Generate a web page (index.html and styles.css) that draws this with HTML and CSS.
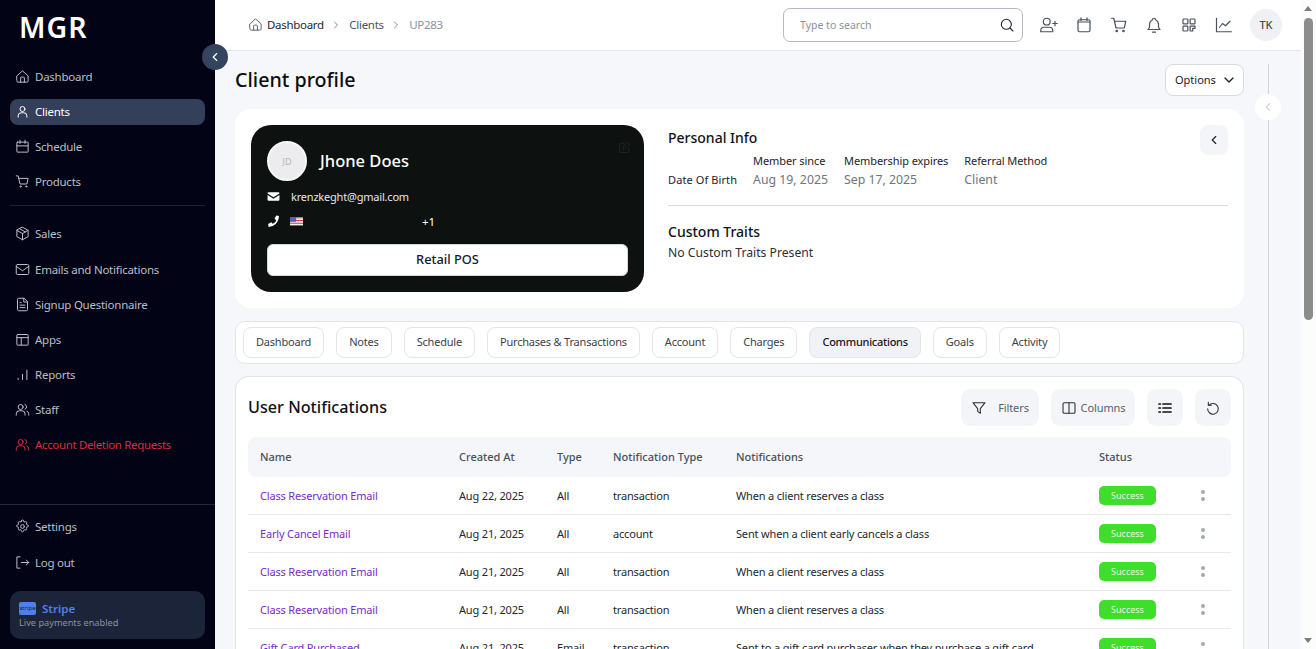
FILE: index.html
```html
<!DOCTYPE html>
<html lang="en">
<head>
  <meta charset="UTF-8">
  <meta name="viewport" content="width=device-width, initial-scale=1.0">
  <title>Client profile</title>
  <link rel="stylesheet" href="styles.css">
</head>
<body>
  <div class="app">
    <aside class="sidebar">
      <div class="logo">MGR</div>
      <button class="collapse" type="button" aria-label="Collapse">
        <svg viewBox="0 0 24 24" class="ico-sm"><path d="M15 6l-6 6 6 6"/></svg>
      </button>
      <nav class="nav">
        <a class="nav-item"><svg viewBox="0 0 24 24" class="ico"><path d="M3 11l9-8 9 8v8a2 2 0 0 1-2 2H5a2 2 0 0 1-2-2z"/><path d="M9 21v-7a1 1 0 0 1 1-1h4a1 1 0 0 1 1 1v7"/></svg>Dashboard</a>
        <a class="nav-item active"><svg viewBox="0 0 24 24" class="ico"><circle cx="12" cy="8" r="4"/><path d="M5 21v-2a5 5 0 0 1 5-5h4a5 5 0 0 1 5 5v2"/></svg>Clients</a>
        <a class="nav-item"><svg viewBox="0 0 24 24" class="ico"><rect x="3" y="5" width="18" height="16" rx="1"/><path d="M8 2v5M16 2v5M3 11h18"/></svg>Schedule</a>
        <a class="nav-item"><svg viewBox="0 0 24 24" class="ico"><path d="M2 3h3l3 13h11l2-9H6"/><circle cx="9" cy="20" r="1"/><circle cx="18" cy="20" r="1"/></svg>Products</a>
        <div class="nav-sep"></div>
        <a class="nav-item sales"><svg viewBox="0 0 24 24" class="ico"><path d="M12 2l9 5v10l-9 5-9-5V7z"/><path d="M3 7l9 5 9-5M12 12v10M7.5 4.5l9 5"/></svg>Sales</a>
        <a class="nav-item"><svg viewBox="0 0 24 24" class="ico"><rect x="2" y="4" width="20" height="16" rx="2"/><path d="M2 7l10 7 10-7"/></svg>Emails and Notifications</a>
        <a class="nav-item"><svg viewBox="0 0 24 24" class="ico"><path d="M14 2H6a2 2 0 0 0-2 2v16a2 2 0 0 0 2 2h12a2 2 0 0 0 2-2V8z"/><path d="M14 2v6h6M8 13h8M8 17h8M8 9h2"/></svg>Signup Questionnaire</a>
        <a class="nav-item"><svg viewBox="0 0 24 24" class="ico"><rect x="3" y="4" width="18" height="17" rx="1"/><path d="M3 9h18M10 9v12"/></svg>Apps</a>
        <a class="nav-item"><svg viewBox="0 0 24 24" class="ico"><path d="M5 20v-2M12 20v-8M19 20V5"/></svg>Reports</a>
        <a class="nav-item"><svg viewBox="0 0 24 24" class="ico"><circle cx="9" cy="8" r="4"/><path d="M2 21v-2a5 5 0 0 1 5-5h4a5 5 0 0 1 5 5v2M16 4a4 4 0 0 1 0 7.5M22 21v-2a5 5 0 0 0-3-4.5"/></svg>Staff</a>
        <a class="nav-item danger"><svg viewBox="0 0 24 24" class="ico"><circle cx="9" cy="8" r="4"/><path d="M2 21v-2a5 5 0 0 1 5-5h4a5 5 0 0 1 5 5v2M16 4a4 4 0 0 1 0 7.5M22 21v-2a5 5 0 0 0-3-4.5"/></svg>Account Deletion Requests</a>
      </nav>
      <div class="side-bottom">
        <a class="nav-item"><svg viewBox="0 0 24 24" class="ico"><circle cx="12" cy="12" r="3"/><path d="M10.3 3.3a1.7 1.7 0 0 1 3.4 0 1.7 1.7 0 0 0 2.6 1.1 1.7 1.7 0 0 1 2.3 2.3 1.7 1.7 0 0 0 1.1 2.6 1.7 1.7 0 0 1 0 3.4 1.7 1.7 0 0 0-1.1 2.6 1.7 1.7 0 0 1-2.3 2.3 1.7 1.7 0 0 0-2.6 1.1 1.7 1.7 0 0 1-3.4 0 1.7 1.7 0 0 0-2.6-1.1 1.7 1.7 0 0 1-2.3-2.3 1.7 1.7 0 0 0-1.1-2.6 1.7 1.7 0 0 1 0-3.4 1.7 1.7 0 0 0 1.1-2.6 1.7 1.7 0 0 1 2.3-2.3 1.7 1.7 0 0 0 2.6-1.1z"/></svg>Settings</a>
        <a class="nav-item logout"><svg viewBox="0 0 24 24" class="ico"><path d="M8 3H3v18h5M10 12h12M18 8l4 4-4 4"/></svg>Log out</a>
        <div class="stripe">
          <div class="stripe-top"><span class="stripe-logo">stripe</span><span class="stripe-name">Stripe</span></div>
          <div class="stripe-sub">Live payments enabled</div>
        </div>
      </div>
    </aside>

    <div class="main">
      <header class="topbar">
        <div class="crumbs">
          <svg viewBox="0 0 24 24" class="ico crumb-home"><path d="M3 11l9-8 9 8v8a2 2 0 0 1-2 2H5a2 2 0 0 1-2-2z"/><path d="M9 21v-7a1 1 0 0 1 1-1h4a1 1 0 0 1 1 1v7"/></svg>
          <span class="crumb-first">Dashboard</span>
          <svg viewBox="0 0 24 24" class="crumb-sep"><path d="M9 6l6 6-6 6"/></svg>
          <span class="crumb-mid">Clients</span>
          <svg viewBox="0 0 24 24" class="crumb-sep"><path d="M9 6l6 6-6 6"/></svg>
          <span class="crumb-last">UP283</span>
        </div>
        <div class="top-right">
          <div class="search">
            <span class="search-text">Type to search</span>
            <svg viewBox="0 0 24 24" class="ico-search"><circle cx="11" cy="11" r="7.5"/><path d="M21 21l-4.5-4.5"/></svg>
          </div>
          <div class="top-icons">
            <svg viewBox="0 0 24 24" class="top-ico"><circle cx="9" cy="7.5" r="4.5"/><path d="M1 21v-1.5A4.5 4.5 0 0 1 5.5 15h7a4.5 4.5 0 0 1 4.5 4.5V21zM20 7v6M17 10h6"/></svg>
            <svg viewBox="0 0 24 24" class="top-ico"><rect x="4" y="5" width="16" height="16" rx="2"/><path d="M8 2.5V6M16 2.5V6M4 8h16"/></svg>
            <svg viewBox="0 0 24 24" class="top-ico"><path d="M2 3h3l3 13h11l2-9H6"/><circle cx="9" cy="20" r="1"/><circle cx="18" cy="20" r="1"/></svg>
            <svg viewBox="0 0 24 24" class="top-ico"><path d="M10 5a2 2 0 1 1 4 0 7 7 0 0 1 4 6v4l2 3H4l2-3v-4a7 7 0 0 1 4-6M10 21.5h4"/></svg>
            <svg viewBox="0 0 24 24" class="top-ico"><rect x="4" y="4" width="6.5" height="6.5" rx="1"/><rect x="13.5" y="4" width="6.5" height="6.5" rx="1"/><rect x="4" y="13.5" width="6.5" height="6.5" rx="1"/><path d="M13.5 13.5H20v3h-3V20h-3.5z"/></svg>
            <svg viewBox="0 0 24 24" class="top-ico"><path d="M2 3v18h20M6 15l4-5 4 3 6-6"/></svg>
          </div>
          <div class="avatar">TK</div>
        </div>
      </header>

      <div class="body-row">
        <main class="page">
          <div class="page-head">
            <h1>Client profile</h1>
            <button class="options" type="button"><span class="options-label">Options</span>
              <svg viewBox="0 0 24 24" class="options-ico"><path d="M6 9l6 6 6-6"/></svg>
            </button>
          </div>

          <section class="profile">
            <div class="id-card">
              <svg viewBox="0 0 24 24" class="edit"><path d="M11 4H5a2 2 0 0 0-2 2v13a2 2 0 0 0 2 2h13a2 2 0 0 0 2-2v-6M18 3l3 3-9 9H9v-3z"/></svg>
              <div class="id-head">
                <div class="id-avatar">JD</div>
                <div class="id-name">Jhone Does</div>
              </div>
              <div class="id-line">
                <svg viewBox="0 0 24 24" class="solid"><path d="M1 6a2 2 0 0 1 2-2h18a2 2 0 0 1 2 2v.5l-11 7-11-7z"/><path d="M1 9l11 7 11-7v9a2 2 0 0 1-2 2H3a2 2 0 0 1-2-2z"/></svg>
                <span>krenzkeght@gmail.com</span>
              </div>
              <div class="id-line phone">
                <svg viewBox="0 0 24 24" class="solid"><path d="M22 2l-5-1-3 6 3 2.5c-1.2 3-3.5 5.3-6.5 6.5L8 13.5l-6 3 1 5.5c10.5 0 19-9 19-20z"/></svg>
                <svg viewBox="0 0 19 13" class="flag"><rect width="19" height="13" fill="#f1eef2"/><path d="M0 1h19M0 5h19M0 9h19M0 12.5h19" stroke="#d33a4a" stroke-width="1.5"/><rect width="9" height="7" fill="#5a5fb0"/></svg>
                <span class="dial">+1</span>
              </div>
              <button class="retail" type="button">Retail POS</button>
            </div>

            <div class="info">
              <button class="info-toggle" type="button" aria-label="Back">
                <svg viewBox="0 0 24 24" class="ico-sm"><path d="M15 6l-6 6 6 6"/></svg>
              </button>
              <h2>Personal Info</h2>
              <div class="facts">
                <div class="fact fact-first"><div class="fact-label">Date Of Birth</div></div>
                <div class="fact"><div class="fact-label">Member since</div><div class="fact-value">Aug 19, 2025</div></div>
                <div class="fact"><div class="fact-label">Membership expires</div><div class="fact-value">Sep 17, 2025</div></div>
                <div class="fact"><div class="fact-label">Referral Method</div><div class="fact-value">Client</div></div>
              </div>
              <hr class="info-sep">
              <h2>Custom Traits</h2>
              <p class="no-traits">No Custom Traits Present</p>
            </div>
          </section>

          <div class="tabs">
            <a class="tab">Dashboard</a>
            <a class="tab">Notes</a>
            <a class="tab">Schedule</a>
            <a class="tab">Purchases &amp; Transactions</a>
            <a class="tab">Account</a>
            <a class="tab">Charges</a>
            <a class="tab current">Communications</a>
            <a class="tab">Goals</a>
            <a class="tab">Activity</a>
          </div>

          <section class="panel">
            <div class="panel-head">
              <h2>User Notifications</h2>
              <div class="tools">
                <button class="tool filters" type="button"><svg viewBox="0 0 24 24" class="tool-ico"><path d="M3 4h18l-7 9v7l-4-3v-4z"/></svg>Filters</button>
                <button class="tool columns" type="button"><svg viewBox="0 0 24 24" class="tool-ico"><rect x="3" y="4" width="18" height="16" rx="2"/><path d="M12 4v16"/></svg>Columns</button>
                <button class="tool square" type="button"><svg viewBox="0 0 24 24" class="tool-ico heavy"><path d="M9 6h12M9 12h12M9 18h12M3 6h2M3 12h2M3 18h2"/></svg></button>
                <button class="tool square" type="button"><svg viewBox="0 0 24 24" class="tool-ico"><path d="M5 3.5V8h4.5"/><path d="M6 8a8 8 0 1 1-2 5"/></svg></button>
              </div>
            </div>
            <table class="grid">
              <thead>
                <tr><th class="c-name">Name</th><th class="c-date">Created At</th><th class="c-type">Type</th><th class="c-ntype">Notification Type</th><th class="c-note">Notifications</th><th class="c-status">Status</th><th></th></tr>
              </thead>
              <tbody>
                <tr><td><a class="link">Class Reservation Email</a></td><td>Aug 22, 2025</td><td>All</td><td>transaction</td><td>When a client reserves a class</td><td><span class="badge">Success</span></td><td><span class="dots"></span></td></tr>
                <tr><td><a class="link">Early Cancel Email</a></td><td>Aug 21, 2025</td><td>All</td><td>account</td><td>Sent when a client early cancels a class</td><td><span class="badge">Success</span></td><td><span class="dots"></span></td></tr>
                <tr><td><a class="link">Class Reservation Email</a></td><td>Aug 21, 2025</td><td>All</td><td>transaction</td><td>When a client reserves a class</td><td><span class="badge">Success</span></td><td><span class="dots"></span></td></tr>
                <tr><td><a class="link">Class Reservation Email</a></td><td>Aug 21, 2025</td><td>All</td><td>transaction</td><td>When a client reserves a class</td><td><span class="badge">Success</span></td><td><span class="dots"></span></td></tr>
                <tr><td><a class="link">Gift Card Purchased</a></td><td>Aug 21, 2025</td><td>Email</td><td>transaction</td><td>Sent to a gift card purchaser when they purchase a gift card</td><td><span class="badge">Success</span></td><td><span class="dots"></span></td></tr>
              </tbody>
            </table>
          </section>
        </main>

        <div class="rail">
          <button class="rail-toggle" type="button" aria-label="Expand">
            <svg viewBox="0 0 24 24" class="ico-sm"><path d="M15 6l-6 6 6 6"/></svg>
          </button>
        </div>
      </div>
    </div>

    <div class="scrollbar">
      <span class="arrow up"></span>
      <span class="thumb"></span>
      <span class="arrow down"></span>
    </div>
  </div>
</body>
</html>
```

FILE: styles.css
```css
* {
  box-sizing: border-box;
}

html, body {
  margin: 0;
  height: 100%;
  overflow: hidden;
}

body {
  font-family: "Noto Sans", Arial, sans-serif;
  font-size: 12px;
  color: #14171f;
  background: #f6f7fa;
}

svg {
  fill: none;
  stroke: currentColor;
  stroke-width: 1.6;
  stroke-linecap: round;
  stroke-linejoin: round;
  flex-shrink: 0;
}

button {
  font-family: inherit;
  cursor: pointer;
}

h1, h2, p {
  margin: 0;
  font-weight: 500;
}

.ico {
  width: 15px;
  height: 15px;
}

.ico-sm {
  width: 14px;
  height: 14px;
  stroke-width: 2;
}

.app {
  display: flex;
  height: 649px;
  overflow: hidden;
}

/* sidebar */
.sidebar {
  position: relative;
  display: flex;
  flex-direction: column;
  flex: 0 0 215px;
  background: #020314;
  color: #b9bfca;
}

.logo {
  height: 59px;
  padding: 7px 0 0 19px;
  font-size: 28.5px;
  line-height: 40px;
  font-weight: 600;
  letter-spacing: 1px;
  color: #fff;
}

.collapse {
  position: absolute;
  top: 44px;
  left: 202px;
  z-index: 3;
  display: flex;
  align-items: center;
  justify-content: center;
  width: 26px;
  height: 26px;
  padding: 0;
  border: 0;
  border-radius: 50%;
  background: #34435e;
  color: #fff;
}

.nav {
  display: flex;
  flex-direction: column;
  padding: 5px 10px 0;
}

.nav-item {
  display: flex;
  align-items: center;
  gap: 5px;
  height: 26px;
  margin-bottom: 9px;
  padding: 0 0 2px 5px;
  border-radius: 8px;
  font-size: 11.5px;
  letter-spacing: -0.25px;
  white-space: nowrap;
}

.nav-item.active {
  background: #344059;
  color: #fff;
}

.nav-item.danger {
  color: #d5303f;
  letter-spacing: -0.35px;
}

.nav-item.sales {
  margin-bottom: 10px;
}

.nav-sep {
  height: 1px;
  margin: 1px 0 15px;
  background: #1f2433;
}

.side-bottom {
  margin-top: auto;
  padding: 9px 10px 10px;
  border-top: 1px solid #252a38;
}

.nav-item.logout {
  margin-top: 10px;
  margin-bottom: 15px;
}

.stripe {
  height: 48px;
  padding: 10px 9px 0;
  border-radius: 10px;
  background: #1b2438;
}

.stripe-top {
  display: flex;
  align-items: center;
  gap: 6px;
  height: 14px;
}

.stripe-logo {
  width: 17px;
  height: 13px;
  border-radius: 2px;
  background: #4f7fef;
  color: #14213f;
  font-size: 6px;
  line-height: 13px;
  text-align: center;
}

.stripe-name {
  font-weight: 600;
  font-size: 11.5px;
  color: #4f80ee;
}

.stripe-sub {
  margin-top: 2px;
  font-size: 9.2px;
  line-height: 12px;
  color: #8a93a3;
}

/* topbar */
.main {
  display: flex;
  flex-direction: column;
  flex: 1;
  min-width: 0;
}

.topbar {
  display: flex;
  align-items: center;
  justify-content: space-between;
  flex: 0 0 51px;
  padding: 0 19px 1px 33px;
  background: #fff;
  border-bottom: 1px solid #e4e5e8;
}

.crumbs {
  display: flex;
  align-items: center;
  font-size: 11.5px;
  letter-spacing: -0.3px;
}

.crumb-home {
  margin-right: 4px;
  color: #5d6470;
}

.crumb-first {
  color: #23272f;
}

.crumb-mid {
  color: #4b5260;
}

.crumb-last {
  color: #8b919c;
}

.crumb-sep {
  width: 12px;
  height: 12px;
  margin: 0 7px 0 6.5px;
  color: #6a707c;
}

.top-right {
  display: flex;
  align-items: center;
}

.search {
  display: flex;
  align-items: center;
  justify-content: space-between;
  width: 240px;
  height: 34px;
  padding: 0 7px 0 16px;
  border: 1px solid #b6bac2;
  border-radius: 7px;
  font-size: 10.5px;
  color: #8d929b;
}

.ico-search {
  width: 16px;
  height: 16px;
  color: #20242c;
}

.top-icons {
  display: flex;
  align-items: center;
  gap: 17px;
  margin-left: 16.5px;
  color: #4a505c;
}

.top-ico {
  width: 18px;
  height: 18px;
  stroke-width: 1.6;
}

.avatar {
  display: flex;
  align-items: center;
  justify-content: center;
  width: 32px;
  height: 32px;
  margin-left: 17.5px;
  border-radius: 50%;
  background: #eff1f4;
  color: #454b57;
  font-size: 11px;
  font-weight: 500;
}

/* page */
.body-row {
  display: flex;
  flex: 1;
  min-height: 0;
}

.page {
  flex: 1;
  min-width: 0;
  padding: 13px 24px 0 20px;
  overflow: hidden;
}

.page-head {
  display: flex;
  align-items: center;
  justify-content: space-between;
  height: 32px;
  margin-bottom: 13px;
}

h1 {
  padding-bottom: 2px;
  font-size: 19.7px;
  color: #0b0d12;
}

.options {
  display: flex;
  align-items: center;
  justify-content: space-between;
  width: 79px;
  height: 32px;
  padding: 0 6px 0 9px;
  border: 1px solid #d8dbe0;
  border-radius: 8px;
  background: #fff;
  font-size: 11px;
  color: #1c2029;
}

.options-label {
  padding-bottom: 2px;
}

.options-ico {
  width: 16px;
  height: 16px;
  stroke-width: 2;
}

.profile {
  display: flex;
  gap: 24px;
  height: 199px;
  padding: 16px;
  border-radius: 16px;
  background: #fff;
}

.id-card {
  position: relative;
  flex: 0 0 393px;
  padding: 16px;
  border-radius: 20px;
  background: #0d1110;
  color: #e6e8ea;
}

.edit {
  position: absolute;
  top: 16px;
  right: 13px;
  width: 13px;
  height: 13px;
  color: #232827;
}

.id-head {
  display: flex;
  align-items: center;
  gap: 13px;
}

.id-avatar {
  display: flex;
  align-items: center;
  justify-content: center;
  width: 40px;
  height: 40px;
  border-radius: 50%;
  background: #ececee;
  border: 2px solid #f7f7f8;
  color: #b4b6ba;
  font-size: 9px;
}

.id-name {
  margin-bottom: 2px;
  font-size: 16.5px;
  font-weight: 500;
  color: #fff;
}

.id-line {
  display: flex;
  align-items: center;
  gap: 11px;
  height: 25px;
  margin-top: 3px;
  font-size: 11px;
  letter-spacing: -0.2px;
}

.id-line + .id-line {
  margin-top: 0;
}

.solid {
  width: 13px;
  height: 13px;
  fill: #fff;
  stroke: none;
}

.phone {
  gap: 10px;
}

.flag {
  width: 13px;
  height: 9px;
  stroke: none;
}

.dial {
  margin-left: 109px;
  font-size: 11.5px;
  color: #fff;
}

.retail {
  width: 100%;
  height: 32px;
  margin-top: 10px;
  padding: 0 0 2px;
  border: 1px solid #d6d8dc;
  border-radius: 6px;
  background: #fff;
  font-size: 12.8px;
  font-weight: 500;
  color: #15181e;
}

.info {
  position: relative;
  flex: 1;
  padding-top: 3px;
}

.info h2 {
  font-size: 14px;
  line-height: 20px;
  color: #101319;
}

.info-toggle {
  position: absolute;
  top: 0;
  right: 0;
  display: flex;
  align-items: center;
  justify-content: center;
  width: 28px;
  height: 30px;
  padding: 0;
  border: 0;
  border-radius: 8px;
  background: #f4f5f8;
  color: #20242c;
}

.facts {
  display: flex;
  align-items: flex-end;
  gap: 16px;
  height: 38px;
  margin-top: 3px;
}

.fact-first {
  padding-bottom: 1px;
}

.fact-label {
  font-size: 11px;
  line-height: 16px;
  letter-spacing: -0.08px;
  color: #20242c;
}

.fact-first .fact-label {
  letter-spacing: 0.1px;
}

.fact-value {
  margin-top: 2px;
  font-size: 12.3px;
  line-height: 18px;
  color: #6f7580;
}

.info-sep {
  margin: 16px 0 16px;
  border: 0;
  border-top: 1px solid #d8dade;
}

.no-traits {
  margin-top: 2px;
  font-size: 12.2px;
  font-weight: 400;
  color: #2c303a;
}

.tabs {
  display: flex;
  align-items: center;
  gap: 12px;
  height: 43px;
  margin-top: 13px;
  padding: 0 7px;
  border: 1px solid #e3e5ea;
  border-radius: 10px;
  background: #fff;
}

.tab {
  display: flex;
  align-items: center;
  height: 31px;
  padding: 0 12px 2px;
  border: 1px solid #e3e5ea;
  border-radius: 8px;
  font-size: 11px;
  letter-spacing: -0.2px;
  color: #3a3f4a;
  white-space: nowrap;
}

.tab.current {
  background: #f1f2f6;
  color: #15181e;
  font-weight: 500;
  letter-spacing: -0.27px;
}

.panel {
  height: 340px;
  margin-top: 12px;
  padding: 12px 12px 0;
  border: 1px solid #e3e5ea;
  border-bottom: 0;
  border-radius: 14px 14px 0 0;
  background: #fff;
}

.panel-head {
  display: flex;
  align-items: flex-start;
  justify-content: space-between;
  height: 38px;
  margin-bottom: 10px;
}

.panel-head h2 {
  font-size: 16.2px;
  line-height: 36px;
  color: #0f1218;
}

.tools {
  display: flex;
  gap: 12px;
}

.tool {
  display: flex;
  align-items: center;
  justify-content: center;
  height: 37px;
  padding: 0;
  border: 0;
  border-radius: 9px;
  background: #f4f5f8;
  font-size: 11px;
  letter-spacing: -0.1px;
  color: #596070;
}

.filters {
  width: 78px;
  gap: 11px;
}

.columns {
  width: 84px;
  gap: 4px;
}

.square {
  width: 36px;
  color: #20242c;
}

.tool-ico {
  width: 16px;
  height: 16px;
  color: #2a2e37;
}

.tool-ico.heavy {
  stroke-width: 2.6;
  color: #111;
}

.grid {
  width: 100%;
  border-collapse: separate;
  border-spacing: 0;
  table-layout: fixed;
  font-size: 11px;
}

.grid th {
  height: 40px;
  padding: 0 0 2px 12px;
  background: #f5f6f9;
  text-align: left;
  font-weight: 500;
  color: #4a4f59;
}

.grid th:first-child {
  border-radius: 8px 0 0 8px;
}

.grid th:last-child {
  border-radius: 0 8px 8px 0;
}

.grid td {
  height: 38px;
  padding: 0 0 0 12px;
  border-bottom: 1px solid #e6e8ec;
  color: #23272f;
  letter-spacing: -0.17px;
  white-space: nowrap;
  overflow: hidden;
}

.c-name {
  width: 199px;
}

.c-date {
  width: 98px;
}

.c-type {
  width: 56px;
}

.c-ntype {
  width: 123px;
}

.c-note {
  width: 363px;
}

.c-status {
  width: 85px;
}

.link {
  color: #7b2bc9;
}

.badge {
  display: block;
  width: 57px;
  height: 19px;
  border-radius: 5px;
  background: #3fdd2c;
  color: #e4f9df;
  font-size: 9px;
  letter-spacing: 0;
  line-height: 19px;
  text-align: center;
}

.dots {
  display: block;
  width: 4px;
  height: 4px;
  margin: -6px 0 0 17px;
  border-radius: 50%;
  background: #a3a8b0;
  box-shadow: 0 7px 0 #a3a8b0;
}

/* right rail */
.rail {
  position: relative;
  flex: 0 0 33px;
  margin-top: 13px;
  border-left: 1px solid #cfd2d8;
}

.rail-toggle {
  position: absolute;
  top: 30px;
  left: -14px;
  display: flex;
  align-items: center;
  justify-content: center;
  width: 26px;
  height: 26px;
  padding: 0;
  border: 0;
  border-radius: 50%;
  background: #fff;
  color: #d3d6db;
}

/* browser scrollbar */
.scrollbar {
  position: relative;
  flex: 0 0 15px;
  background: #fcfcfc;
}

.thumb {
  position: absolute;
  top: 18px;
  left: 3px;
  width: 9px;
  height: 302px;
  border-radius: 5px;
  background: #8c8c8c;
}

.arrow {
  position: absolute;
  left: 3px;
  border-left: 4.5px solid transparent;
  border-right: 4.5px solid transparent;
}

.arrow.up {
  top: 6px;
  border-bottom: 5px solid #7d7d7d;
}

.arrow.down {
  bottom: 6px;
  border-top: 5px solid #7d7d7d;
}
```
